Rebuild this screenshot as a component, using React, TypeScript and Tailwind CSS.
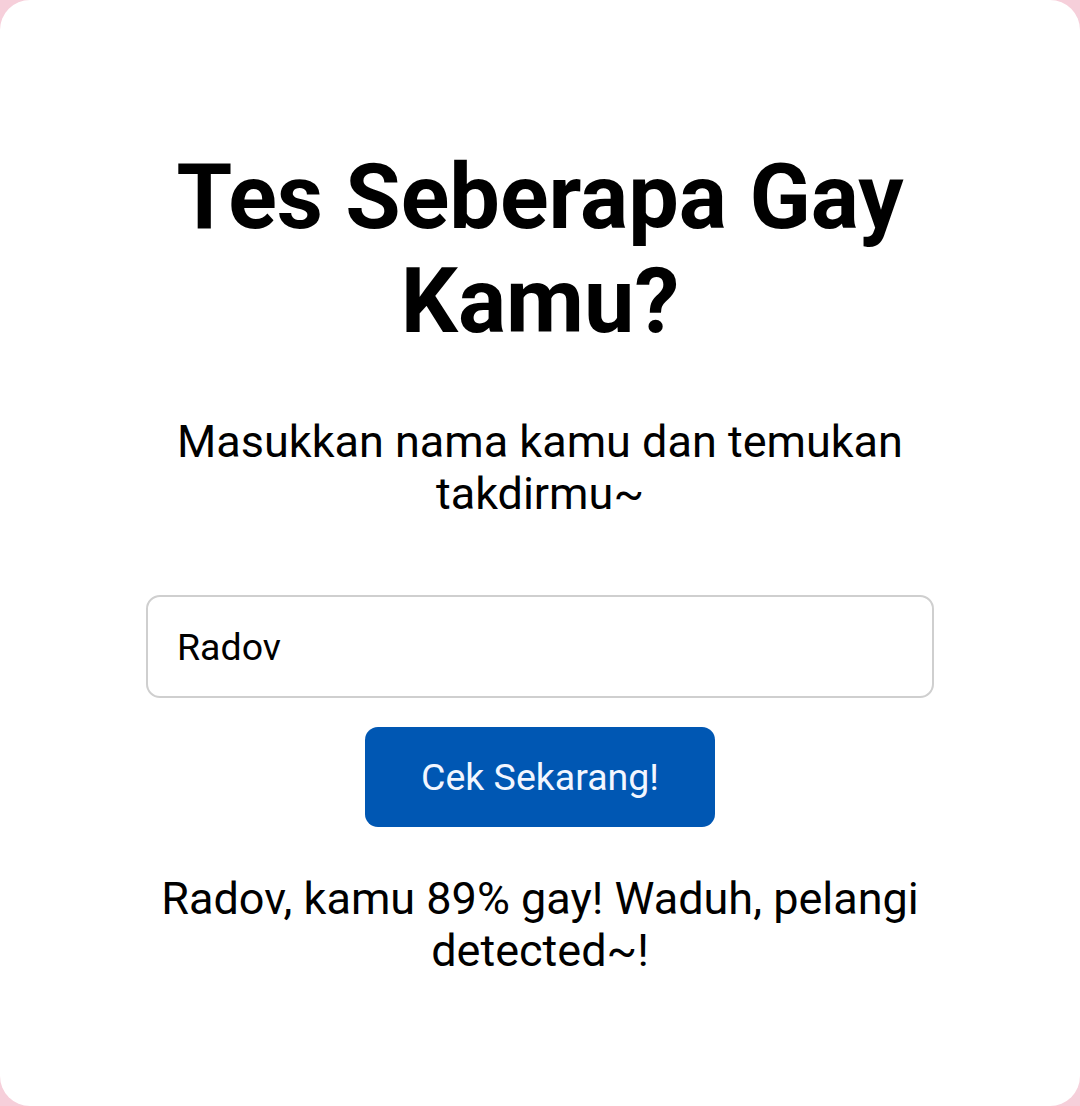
import React, { useState } from 'react';

export default function App() {
  const [name, setName] = useState('Radov');
  const [result, setResult] = useState('Radov, kamu 89% gay! Waduh, pelangi detected~!');

  const handleCheck = () => {
    if (!name.trim()) return;
    const pct = (name.length * 37 + 11) % 101;
    setResult(`${name}, kamu ${pct}% gay! Waduh, pelangi detected~!`);
  };

  return (
    <div className="min-h-[1106px] w-full bg-[#f6cfda] font-['Roboto',sans-serif] text-black">
      <div className="min-h-[1106px] w-full rounded-[30px] bg-white flex flex-col items-center pt-[146px] px-[146px]">
        <h1 className="text-center font-bold text-[90px] leading-[104px]">Tes Seberapa Gay Kamu?</h1>
        <p className="mt-[62px] text-center text-[45px] leading-[52px]">Masukkan nama kamu dan temukan takdirmu~</p>
        <input
          type="text"
          value={name}
          onChange={(e) => setName(e.target.value)}
          className="mt-[75px] w-full h-[103px] rounded-[14px] border-2 border-[#cfcfcf] px-[29px] text-[37.5px] outline-none"
        />
        <button
          onClick={handleCheck}
          className="mt-[29px] w-[350px] h-[100px] rounded-[13px] bg-[#0057b3] text-[#f2f6ff] text-[37.5px]"
        >
          Cek Sekarang!
        </button>
        <p className="mt-[46px] text-center text-[45px] leading-[52px]">{result}</p>
      </div>
    </div>
  );
}
